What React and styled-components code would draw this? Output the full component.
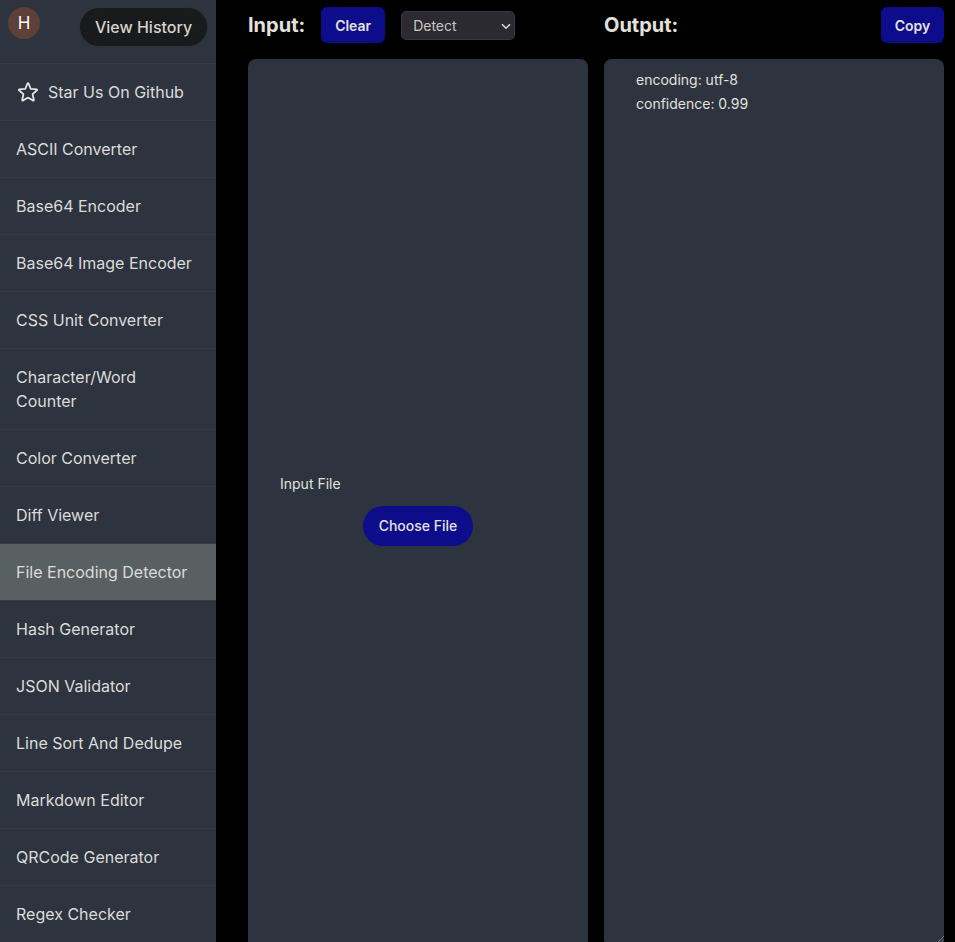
import React from "react";
import styled, { createGlobalStyle } from "styled-components";

const GlobalStyle = createGlobalStyle`
  *, *::before, *::after { box-sizing: border-box; }
  html, body { margin: 0; background: #000; overflow: hidden; }
  body { font-family: "Inter", sans-serif; color: #e3e1dc; }
  button, select, textarea { font: inherit; color: inherit; }
`;

const Page = styled.div`
  display: grid;
  grid-template-columns: 216px 1fr;
  height: 942px;
  overflow: hidden;
  background: #000;
`;

const Sidebar = styled.nav`
  background: #2d3440;
  overflow: hidden;
`;

const Account = styled.div`
  display: flex;
  justify-content: space-between;
  align-items: flex-start;
  height: 63px;
  padding: 7px 8px 0;
`;

const Avatar = styled.div`
  display: flex;
  align-items: center;
  justify-content: center;
  width: 32px;
  height: 32px;
  border-radius: 50%;
  background: #5d4037;
  color: #fff;
  font-size: 17px;
  line-height: 1;
`;

const HistoryButton = styled.button`
  height: 40px;
  width: 129px;
  padding: 0;
  border: 1px solid #2d3336;
  border-radius: 20px;
  background: #181a1b;
  color: #d6d3cd;
  font-size: 16px;
  font-weight: 500;
`;

const NavItem = styled.a`
  display: flex;
  align-items: center;
  padding: 16px;
  border-top: 1px solid #363b3d;
  background: ${(p) => (p.$active ? "#586062" : "transparent")};
  font-size: 16px;
  line-height: 24px;
  color: #dddbd7;
`;

const StarIcon = styled.svg`
  width: 24px;
  height: 24px;
  margin-right: 8px;
  fill: none;
  stroke: #e8e6e3;
  stroke-width: 1.75;
  stroke-linejoin: round;
`;

const Workspace = styled.main`
  display: grid;
  grid-template-columns: 340px 340px;
  column-gap: 16px;
  padding-left: 32px;
`;

const Pane = styled.section`
  display: flex;
  flex-direction: column;
  min-width: 0;
`;

const PaneHeader = styled.header`
  display: flex;
  align-items: center;
  gap: 16px;
  height: 36px;
  margin: 7px 0 16px;
`;

const Title = styled.h2`
  margin: 0;
  font-size: 20px;
  line-height: 28px;
  font-weight: 700;
`;

const ActionButton = styled.button`
  width: ${(p) => p.$width};
  height: 36px;
  margin-left: ${(p) => (p.$end ? "auto" : "0")};
  padding: 0;
  border: 0;
  border-radius: 6px;
  background: #0d0d8c;
  font-size: 14px;
  font-weight: 600;
`;

const SelectWrap = styled.div`
  position: relative;
  width: 114px;
  height: 29px;
`;

const ModeSelect = styled.select`
  appearance: none;
  display: block;
  width: 100%;
  height: 100%;
  padding: 0 11px;
  border: 1px solid #38373f;
  border-radius: 5px;
  background: #2b2a33;
  color: #cbc7c0;
  font-size: 14px;
`;

const Chevron = styled.svg`
  position: absolute;
  right: 4px;
  top: 12px;
  width: 10px;
  height: 7px;
  fill: none;
  stroke: #dcdad5;
  stroke-width: 1.6;
  pointer-events: none;
`;

const FilePanel = styled.div`
  display: flex;
  flex-direction: column;
  justify-content: center;
  height: 902px;
  padding: 0 32px;
  border-radius: 8px;
  background: #2d3440;
  font-size: 14px;
  line-height: 20px;
`;

const ChooseButton = styled.button`
  align-self: center;
  width: 110px;
  height: 40px;
  margin-top: 12px;
  padding: 0;
  border: 0;
  border-radius: 20px;
  background: #0d0d8c;
  font-size: 14px;
  font-weight: 500;
`;

const OutputWrap = styled.div`
  position: relative;
`;

const OutputArea = styled.textarea`
  display: block;
  width: 100%;
  height: 888px;
  padding: 9px 32px;
  border: 0;
  border-radius: 8px;
  outline: 0;
  resize: none;
  background: #2d3440;
  font-size: 14px;
  line-height: 24px;
`;

const Grip = styled.svg`
  position: absolute;
  right: 0;
  top: 877px;
  width: 6px;
  height: 6px;
  stroke: #8b8f94;
  stroke-width: 0.8;
`;

const TOOLS = [
  "ASCII Converter", "Base64 Encoder", "Base64 Image Encoder", "CSS Unit Converter",
  "Character/Word Counter", "Color Converter", "Diff Viewer", "File Encoding Detector",
  "Hash Generator", "JSON Validator", "Line Sort And Dedupe", "Markdown Editor",
  "QRCode Generator", "Regex Checker",
];

export default function App() {
  return (
    <>
      <GlobalStyle />
      <Page>
        <Sidebar>
          <Account>
            <Avatar>H</Avatar>
            <HistoryButton>View History</HistoryButton>
          </Account>
          <NavItem>
            <StarIcon viewBox="0 0 24 24">
              <path d="M11.48 3.5a.56.56 0 0 1 1.04 0l2.13 5.1a.56.56 0 0 0 .47.35l5.52.44c.5.04.7.66.32.99l-4.2 3.6a.56.56 0 0 0-.18.56l1.28 5.38a.56.56 0 0 1-.84.61l-4.72-2.88a.56.56 0 0 0-.59 0l-4.72 2.88a.56.56 0 0 1-.84-.61l1.28-5.38a.56.56 0 0 0-.18-.56l-4.2-3.6a.56.56 0 0 1 .32-.99l5.52-.44a.56.56 0 0 0 .47-.35z" />
            </StarIcon>
            Star Us On Github
          </NavItem>
          {TOOLS.map((name) => (
            <NavItem key={name} $active={name === "File Encoding Detector"}>{name}</NavItem>
          ))}
        </Sidebar>
        <Workspace>
          <Pane>
            <PaneHeader>
              <Title>Input:</Title>
              <ActionButton $width="64px">Clear</ActionButton>
              <SelectWrap>
                <ModeSelect defaultValue="Detect">
                  <option>Detect</option>
                  <option>Convert</option>
                </ModeSelect>
                <Chevron viewBox="0 0 10 7">
                  <path d="M1 1.2 5 5.2 9 1.2" />
                </Chevron>
              </SelectWrap>
            </PaneHeader>
            <FilePanel>
              <span>Input File</span>
              <ChooseButton>Choose File</ChooseButton>
            </FilePanel>
          </Pane>
          <Pane>
            <PaneHeader>
              <Title>Output:</Title>
              <ActionButton $width="63px" $end>Copy</ActionButton>
            </PaneHeader>
            <OutputWrap>
              <OutputArea readOnly spellCheck={false} value={"encoding: utf-8\nconfidence: 0.99"} />
              <Grip viewBox="0 0 6 6">
                <path d="M0 6 6 0M3.5 6 6 3.5" />
              </Grip>
            </OutputWrap>
          </Pane>
        </Workspace>
      </Page>
    </>
  );
}
